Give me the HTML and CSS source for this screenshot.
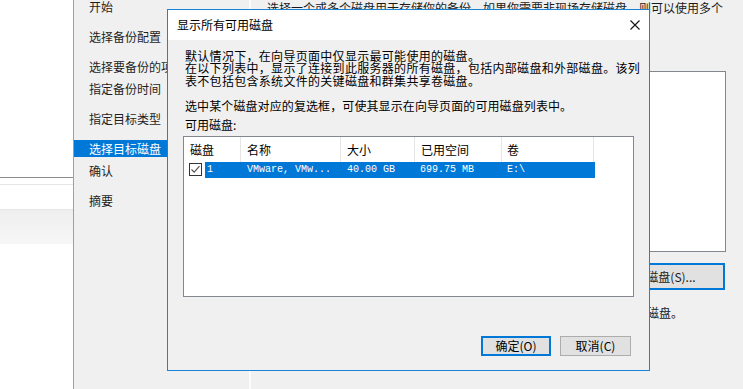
FILE: index.html
```html
<!DOCTYPE html>
<html lang="zh-CN">
<head>
<meta charset="utf-8">
<title>显示所有可用磁盘</title>
<link rel="stylesheet" href="styles.css">
</head>
<body>
<div class="window">
  <div class="leftpane">
    <div class="lp-top"></div>
    <div class="lp-line1"></div>
    <div class="lp-gap"></div>
    <div class="lp-line2"></div>
    <div class="lp-row"></div>
    <div class="lp-line2"></div>
    <div class="lp-grad"></div>
  </div>
  <nav class="nav">
    <div class="nav-item first">开始</div>
    <div class="nav-item">选择备份配置</div>
    <div class="nav-item">选择要备份的项目</div>
    <div class="nav-item tight">指定备份时间</div>
    <div class="nav-item">指定目标类型</div>
    <div class="nav-item selected">选择目标磁盘</div>
    <div class="nav-item tight">确认</div>
    <div class="nav-item">摘要</div>
  </nav>
  <main class="content">
    <p class="intro">选择一个或多个磁盘用于存储你的备份。如果你需要非现场存储磁盘，则可以使用多个</p>
    <div class="disklist"></div>
    <div class="btnrow"><button class="bgbtn">显示所有可用磁盘(S)...</button></div>
    <p class="hint">如果未列出磁盘，请单击显示所有可用磁盘按钮以查看连接到此计算机的磁盘。</p>
  </main>
</div>

<div class="dialog">
  <div class="titlebar">
    <span class="title">显示所有可用磁盘</span>
    <svg class="close" width="10" height="10" viewBox="0 0 10 10"><path d="M0.5 0.5 L9.5 9.5 M9.5 0.5 L0.5 9.5" stroke="#111" stroke-width="1.1" fill="none"/></svg>
  </div>
  <div class="body">
    <p class="p1">默认情况下，在向导页面中仅显示最可能使用的磁盘。<br>在以下列表中，显示了连接到此服务器的所有磁盘，包括内部磁盘和外部磁盘。该列<br>表不包括包含系统文件的关键磁盘和群集共享卷磁盘。</p>
    <p class="p2">选中某个磁盘对应的复选框，可使其显示在向导页面的可用磁盘列表中。</p>
    <p class="p3">可用磁盘:</p>
    <div class="listbox">
      <div class="lhead">
        <div class="hc c1">磁盘</div>
        <div class="hc c2">名称</div>
        <div class="hc c3">大小</div>
        <div class="hc c4">已用空间</div>
        <div class="hc c5">卷</div>
      </div>
      <div class="lrow">
        <span class="chk"><svg width="11" height="11" viewBox="0 0 11 11"><path d="M1.5 5.5 L4.2 8.2 L9.5 2.2" stroke="#555" stroke-width="1.2" fill="none"/></svg></span>
        <div class="sel">
          <span class="rc r1">1</span>
          <span class="rc r2">VMware, VMw...</span>
          <span class="rc r3">40.00 GB</span>
          <span class="rc r4">699.75 MB</span>
          <span class="rc r5">E:\</span>
        </div>
      </div>
    </div>
    <div class="footer">
      <button class="btn primary">确定(O)</button>
      <button class="btn">取消(C)</button>
    </div>
  </div>
</div>
</body>
</html>
```
FILE: styles.css
```css
* { box-sizing: border-box; }
html, body { margin: 0; padding: 0; }
body {
  width: 743px;
  height: 389px;
  overflow: hidden;
  position: relative;
  background: #f0f0f0;
  font-family: "Noto Sans CJK SC", "Noto Sans", sans-serif;
  font-size: 12px;
  color: #1a1a1a;
}
p { margin: 0; }

.window {
  display: flex;
  height: 389px;
}

/* left pane */
.leftpane {
  flex: none;
  width: 74px;
  background: #fff;
  display: flex;
  flex-direction: column;
  border-right: 1px solid #a0a0a0;
}
.lp-top { height: 177px; }
.lp-line1 { height: 1px; background: #8c8c8c; }
.lp-gap { height: 6px; }
.lp-line2 { height: 1px; background: #e6e6e6; }
.lp-row { height: 24px; }
.lp-grad { height: 34px; background: linear-gradient(#eeeeee, #f7f7f7); }

/* nav */
.nav {
  flex: none;
  width: 177px;
  background: #f0f0f0;
  border-right: 2px solid #fbfbfb;
  display: flex;
  flex-direction: column;
}
.nav-item {
  height: 17px;
  line-height: 17px;
  padding-left: 15px;
  margin-top: 13px;
  white-space: nowrap;
  color: #1e1e1e;
}
.nav-item.first { margin-top: -2px; }
.nav-item.tight { margin-top: 5px; }
.nav-item.selected { background: #0078d7; color: #fff; }

/* content behind */
.content {
  flex: 1;
  padding-left: 16px;
  display: flex;
  flex-direction: column;
}
.intro {
  margin-top: 2px;
  line-height: 12px;
  white-space: nowrap;
}
.disklist {
  margin-top: 57px;
  width: 459px;
  height: 181px;
  background: #fff;
  border: 1px solid #828790;
}
.btnrow {
  width: 459px;
  display: flex;
  justify-content: flex-end;
  margin-top: 11px;
}
.bgbtn {
  width: 180px;
  height: 27px;
  margin-right: 1px;
  border: 2px solid #0078d7;
  background: #e1e1e1;
  font: inherit;
  color: #1a1a1a;
  padding: 0;
}
.hint {
  margin-top: 17px;
  margin-left: -4px;
  line-height: 12px;
  white-space: nowrap;
}

/* dialog */
.dialog {
  position: absolute;
  left: 167px;
  top: 9px;
  width: 483px;
  height: 362px;
  border: 1px solid #1883d7;
  background: #f0f0f0;
  display: flex;
  flex-direction: column;
}
.titlebar {
  height: 30px;
  background: #fff;
  display: flex;
  align-items: center;
  justify-content: space-between;
  padding: 0 9px 0 9px;
}
.title { font-size: 12px; line-height: 14px; color: #000; }
.close { display: block; }

.body {
  padding: 10px 14px 0 15px;
  display: flex;
  flex-direction: column;
}
.p1 {
  padding-left: 2px;
  line-height: 12.3px;
  letter-spacing: 0.3px;
  white-space: nowrap;
  color: #000;
}
.p2 {
  padding-left: 2px;
  margin-top: 13px;
  line-height: 12px;
  letter-spacing: 0.1px;
  white-space: nowrap;
  color: #000;
}
.p3 {
  padding-left: 2px;
  margin-top: 7px;
  line-height: 12px;
  color: #000;
}
.listbox {
  margin-top: 5px;
  width: 451px;
  height: 161px;
  background: #fff;
  border: 1px solid #828790;
}
.lhead {
  display: flex;
  height: 25px;
}
.hc {
  height: 25px;
  line-height: 25px;
  padding-left: 6px;
  border-right: 1px solid #e5e5e5;
  color: #000;
}
.c1 { width: 57px; }
.c2 { width: 100px; }
.c3 { width: 74px; }
.c4 { width: 87px; }
.c5 { width: 92px; padding-left: 5px; }

.lrow {
  display: flex;
  align-items: center;
  height: 16px;
}
.chk {
  margin-left: 5px;
  width: 13px;
  height: 13px;
  border: 1px solid #333;
  background: #fff;
  display: flex;
  align-items: center;
  justify-content: center;
}
.sel {
  margin-left: 3px;
  width: 390px;
  height: 16px;
  background: #0078d7;
  display: flex;
  align-items: center;
  font-family: "Liberation Mono", "DejaVu Sans Mono", monospace;
  font-size: 10px;
  color: #fff;
  white-space: nowrap;
}
.rc { display: block; line-height: 16px; }
.r1 { width: 36px; padding-left: 2px; }
.r2 { width: 100px; padding-left: 6px; }
.r3 { width: 74px; padding-left: 6px; }
.r4 { width: 87px; padding-left: 5px; }
.r5 { width: 93px; padding-left: 5px; }

.footer {
  margin-top: 39px;
  display: flex;
  justify-content: flex-end;
  gap: 9px;
  padding-right: 4px;
}
.btn {
  width: 71px;
  height: 20px;
  padding: 0;
  background: #e1e1e1;
  border: 1px solid #adadad;
  font: inherit;
  font-size: 12px;
  line-height: 16px;
  color: #000;
}
.btn.primary { width: 70px; border: 2px solid #0078d7; }
```
